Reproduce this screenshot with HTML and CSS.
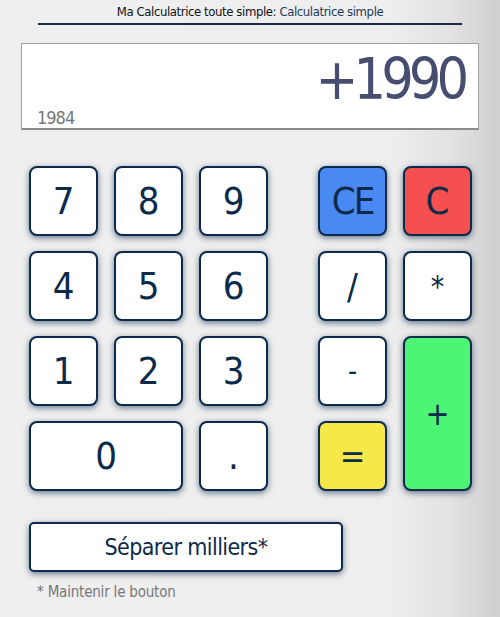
FILE: index.html
```html
<!DOCTYPE html>
<html lang="fr">
<head>
<meta charset="utf-8">
<title>Calculatrice simple</title>
<link rel="stylesheet" href="styles.css">
</head>
<body>
<div class="page">
  <header class="header">
    <h1 class="title">Ma Calculatrice toute simple: <span class="title-accent">Calculatrice simple</span></h1>
  </header>
  <div class="display">
    <div class="display-main">+1990</div>
    <div class="display-prev">1984</div>
  </div>
  <div class="keypad">
    <div class="keys-left">
      <button class="key">7</button>
      <button class="key">8</button>
      <button class="key">9</button>
      <button class="key">4</button>
      <button class="key">5</button>
      <button class="key">6</button>
      <button class="key">1</button>
      <button class="key">2</button>
      <button class="key">3</button>
      <button class="key key-wide">0</button>
      <button class="key key-dot">.</button>
    </div>
    <div class="keys-right">
      <button class="key key-ce">CE</button>
      <button class="key key-c">C</button>
      <button class="key key-op">/</button>
      <button class="key key-op key-star">*</button>
      <button class="key key-op key-minus">-</button>
      <button class="key key-plus">+</button>
      <button class="key key-eq">=</button>
    </div>
  </div>
  <button class="sep-btn">Séparer milliers*</button>
  <p class="note">* Maintenir le bouton</p>
</div>
</body>
</html>
```

FILE: styles.css
```css
html, body {
  margin: 0;
  padding: 0;
}
body {
  width: 500px;
  height: 617px;
  overflow: hidden;
  background: linear-gradient(to right, #efefef 0%, #eeeeee 78%, #e2e2e2 90%, #cfcfcf 100%);
  font-family: "DejaVu Sans Condensed", "DejaVu Sans", sans-serif;
  color: #0c2a4a;
}
.page {
  display: flex;
  flex-direction: column;
}
.header {
  margin: 0 38px;
  border-bottom: 2px solid #1a2b45;
  height: 23px;
  display: flex;
  justify-content: center;
}
.title {
  margin: 4px 0 0;
  font-size: 13px;
  font-weight: normal;
  line-height: 16px;
  letter-spacing: -0.4px;
  color: #111;
}
.title-accent {
  color: #1b3a5c;
}
.display {
  margin: 18px 21px 0;
  height: 84px;
  background: #fff;
  border: 1px solid #a0a0a0;
  border-bottom: 2px solid #8a8a8a;
  display: flex;
  flex-direction: column;
}
.display-main {
  text-align: right;
  font-size: 57px;
  line-height: 60px;
  margin-top: 5px;
  padding-right: 14px;
  letter-spacing: -5px;
  color: #474d70;
}
.display-prev {
  font-size: 18px;
  line-height: 18px;
  padding-left: 15px;
  letter-spacing: -1px;
  color: #777;
}
.keypad {
  display: flex;
  gap: 50px;
  margin: 36px 0 0 29px;
}
.keys-left {
  display: grid;
  grid-template-columns: repeat(3, 69px);
  grid-auto-rows: 70px;
  gap: 15px 16px;
}
.keys-right {
  display: grid;
  grid-template-columns: repeat(2, 69px);
  grid-auto-rows: 70px;
  gap: 15px 16px;
}
.key {
  box-sizing: border-box;
  border: 2px solid #0c2a4a;
  border-radius: 8px;
  background: #fff;
  box-shadow: 0 2px 6px rgba(12, 42, 80, 0.6);
  font-family: inherit;
  font-size: 38px;
  color: #0c2a4a;
  padding: 0;
  display: flex;
  align-items: center;
  justify-content: center;
}
.key-wide {
  grid-column: span 2;
}
.key-ce {
  background: #4a88f2;
  letter-spacing: -2px;
}
.key-c {
  background: #f64f4f;
}
.key-op {
  font-size: 36px;
}
.key-star {
  font-size: 30px;
}
.key-minus {
  font-size: 28px;
}
.key-plus {
  grid-column: 2;
  grid-row: 3 / span 2;
  background: #4cf574;
  font-size: 32px;
}
.key-eq {
  grid-column: 1;
  grid-row: 4;
  background: #f7e84a;
  font-size: 34px;
}
.sep-btn {
  box-sizing: border-box;
  align-self: flex-start;
  margin: 31px 0 0 29px;
  width: 314px;
  height: 50px;
  border: 2px solid #0c2a4a;
  border-radius: 5px;
  background: #fff;
  box-shadow: 0 2px 6px rgba(12, 42, 80, 0.6);
  font-family: inherit;
  font-size: 23px;
  letter-spacing: -0.6px;
  color: #0c2a4a;
  padding: 0;
}
.note {
  margin: 10px 0 0 37px;
  font-size: 15px;
  line-height: 20px;
  letter-spacing: -0.2px;
  color: #777;
}
```
